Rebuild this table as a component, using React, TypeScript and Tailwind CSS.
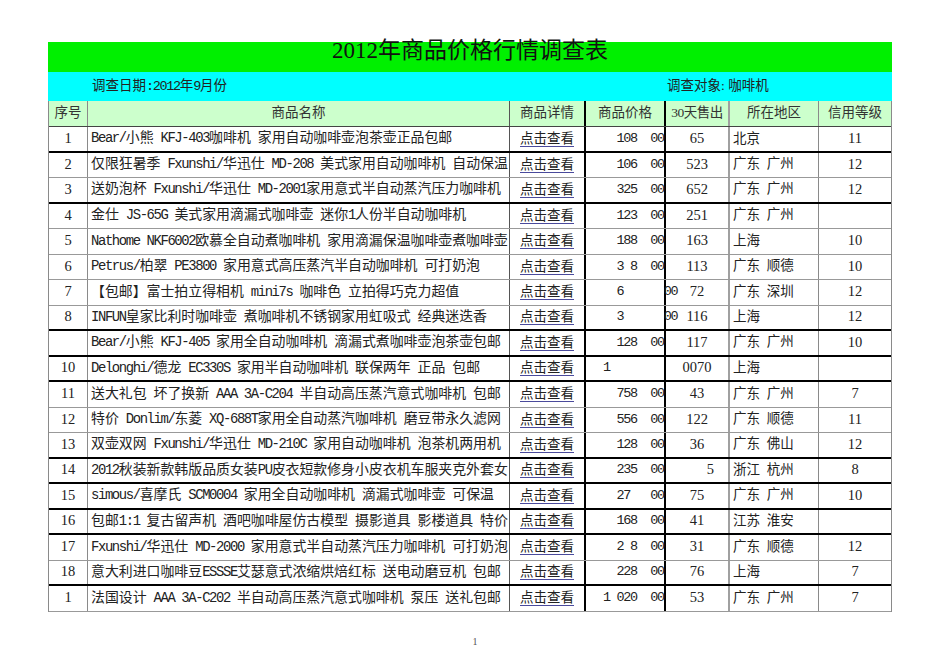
import React from 'react'

type Row = {
  n: string
  name: string
  price: string
  sold: string
  area: string
  credit: string
  line: 'k' | 'g'
  soldRight?: boolean
}

const rows: Row[] = [
  { n: '1', name: 'Bear/小熊 KFJ-403咖啡机 家用自动咖啡壶泡茶壶正品包邮', price: '  108  00', sold: '65', area: '北京', credit: '11', line: 'k' },
  { n: '2', name: '仅限狂暑季 Fxunshi/华迅仕 MD-208 美式家用自动咖啡机 自动保温', price: '  106  00', sold: '523', area: '广东 广州', credit: '12', line: 'g' },
  { n: '3', name: '送奶泡杯 Fxunshi/华迅仕 MD-2001家用意式半自动蒸汽压力咖啡机', price: '  325  00', sold: '652', area: '广东 广州', credit: '12', line: 'k' },
  { n: '4', name: '金仕 JS-65G 美式家用滴漏式咖啡壶 迷你1人份半自动咖啡机', price: '  123  00', sold: '251', area: '广东 广州', credit: '', line: 'g' },
  { n: '5', name: 'Nathome NKF6002欧慕全自动煮咖啡机 家用滴漏保温咖啡壶煮咖啡壶', price: '  188  00', sold: '163', area: '上海', credit: '10', line: 'g' },
  { n: '6', name: 'Petrus/柏翠 PE3800 家用意式高压蒸汽半自动咖啡机 可打奶泡', price: '  3 8  00', sold: '113', area: '广东 顺德', credit: '10', line: 'g' },
  { n: '7', name: '【包邮】富士拍立得相机 mini7s 咖啡色 立拍得巧克力超值', price: '  6      00', sold: '72', area: '广东 深圳', credit: '12', line: 'g' },
  { n: '8', name: 'INFUN皇家比利时咖啡壶 煮咖啡机不锈钢家用虹吸式 经典迷迭香', price: '  3      00', sold: '116', area: '上海', credit: '12', line: 'k' },
  { n: '', name: 'Bear/小熊 KFJ-405 家用全自动咖啡机 滴漏式煮咖啡壶泡茶壶包邮', price: '  128  00', sold: '117', area: '广东 广州', credit: '10', line: 'k' },
  { n: '10', name: 'Delonghi/德龙 EC330S 家用半自动咖啡机 联保两年 正品 包邮', price: '1', sold: '0070', area: '上海', credit: '', line: 'k' },
  { n: '11', name: '送大礼包 坏了换新 AAA 3A-C204 半自动高压蒸汽意式咖啡机 包邮', price: '  758  00', sold: '43', area: '广东 广州', credit: '7', line: 'g' },
  { n: '12', name: '特价 Donlim/东菱 XQ-688T家用全自动蒸汽咖啡机 磨豆带永久滤网', price: '  556  00', sold: '122', area: '广东 顺德', credit: '11', line: 'g' },
  { n: '13', name: '双壶双网 Fxunshi/华迅仕 MD-210C 家用自动咖啡机 泡茶机两用机', price: '  128  00', sold: '36', area: '广东 佛山', credit: '12', line: 'k' },
  { n: '14', name: '2012秋装新款韩版品质女装PU皮衣短款修身小皮衣机车服夹克外套女', price: '  235  00', sold: '5', area: '浙江 杭州', credit: '8', line: 'k', soldRight: true },
  { n: '15', name: 'simous/喜摩氏 SCM0004 家用全自动咖啡机 滴漏式咖啡壶 可保温', price: '  27   00', sold: '75', area: '广东 广州', credit: '10', line: 'k' },
  { n: '16', name: '包邮1:1 复古留声机 酒吧咖啡屋仿古模型 摄影道具 影楼道具 特价', price: '  168  00', sold: '41', area: '江苏 淮安', credit: '', line: 'k' },
  { n: '17', name: 'Fxunshi/华迅仕 MD-2000 家用意式半自动蒸汽压力咖啡机 可打奶泡', price: '  2 8  00', sold: '31', area: '广东 顺德', credit: '12', line: 'g' },
  { n: '18', name: '意大利进口咖啡豆ESSSE艾瑟意式浓缩烘焙红标 送电动磨豆机 包邮', price: '  228  00', sold: '76', area: '上海', credit: '7', line: 'k' },
  { n: '1', name: '法国设计 AAA 3A-C202 半自动高压蒸汽意式咖啡机 泵压 送礼包邮', price: '1 020  00', sold: '53', area: '广东 广州', credit: '7', line: 'g' },
]

// latin runs get a half-width mono look, like SimSun
function Mixed({ text }: { text: string }) {
  const parts = text.match(/[\x20-\x7e]+|[^\x20-\x7e]+/g) ?? []
  return (
    <span className="whitespace-pre">
      {parts.map((p, i) =>
        /^[\x20-\x7e]/.test(p) ? (
          <span key={i} className="font-['Liberation_Mono'] tracking-[-0.1em]">{p}</span>
        ) : (
          <span key={i}>{p}</span>
        )
      )}
    </span>
  )
}

const c1 = 'w-[39px] shrink-0 border-r border-[#8a8a8a] flex items-center justify-center'
const c2 = 'w-[422px] shrink-0 border-r border-[#555] flex items-center overflow-hidden whitespace-nowrap'
const c3 = 'w-[76px] shrink-0 border-r-2 border-black flex items-center justify-center'
const c4 = 'w-[80px] shrink-0 border-r-2 border-black flex items-center'
const c5 = 'w-[64px] shrink-0 border-r-2 border-[#a0a0a0] flex items-center justify-center'
const c6 = 'w-[89px] shrink-0 border-r border-[#8a8a8a] flex items-center'
const c7 = 'flex-1 flex items-center justify-center'

export default function App() {
  return (
    <div className="w-[950px] h-[672px] bg-white pt-[42px] text-[#222] font-['Liberation_Serif','Noto_Sans_CJK_SC',serif] text-[13.5px]">
      <div className="ml-[48px] w-[844px]">
        <div className="h-[30px] bg-[#00f000] flex justify-center">
          <div className="text-[23px] leading-[23px] mt-[-3px] text-[#111]">2012年商品价格行情调查表</div>
        </div>
        <div className="h-[29px] bg-[#00ffff] flex items-center">
          <div className="pl-[44px] w-[619px]">
            <Mixed text="调查日期:2012年9月份" />
          </div>
          <div>调查对象: 咖啡机</div>
        </div>
        <div className="border-l border-r border-[#8a8a8a]">
          <div className="h-[26px] flex bg-[#ccffcc] border-b border-[#444] text-[#333]">
            <div className={c1}>序号</div>
            <div className={c2 + ' justify-center'}>商品名称</div>
            <div className={c3}>商品详情</div>
            <div className={c4 + ' justify-center'}>商品价格</div>
            <div className={c5 + ' tracking-[-0.5px]'}>30天售出</div>
            <div className={c6 + ' justify-center'}>所在地区</div>
            <div className={c7}>信用等级</div>
          </div>
          {rows.map((r, i) => (
            <div
              key={i}
              className={
                'h-[25.5px] flex ' +
                (r.line === 'k' ? 'border-b-2 border-black' : 'border-b border-[#999]')
              }
            >
              <div className={c1 + ' text-[14.5px]'}>{r.n}</div>
              <div className={c2 + ' pl-[3px] text-[13.9px]'}>
                <Mixed text={r.name} />
              </div>
              <div className={c3}>
                <span className="text-[#222] underline decoration-[#4a4a9c] underline-offset-[3px]">点击查看</span>
              </div>
              <div className={c4 + ' pl-[17px] overflow-visible'}>
                <span className="whitespace-pre font-['Liberation_Mono'] tracking-[-0.1em] text-[13.5px]">{r.price}</span>
              </div>
              <div className={c5 + ' text-[14.5px]' + (r.soldRight ? ' !justify-end pr-[14px]' : '')}>{r.sold}</div>
              <div className={c6 + ' pl-[3px]'}>
                <Mixed text={r.area} />
              </div>
              <div className={c7 + ' text-[14.5px]'}>{r.credit}</div>
            </div>
          ))}
        </div>
        <div className="mt-[22px] pl-[10px] text-center text-[10px] text-[#555]">1</div>
      </div>
    </div>
  )
}
